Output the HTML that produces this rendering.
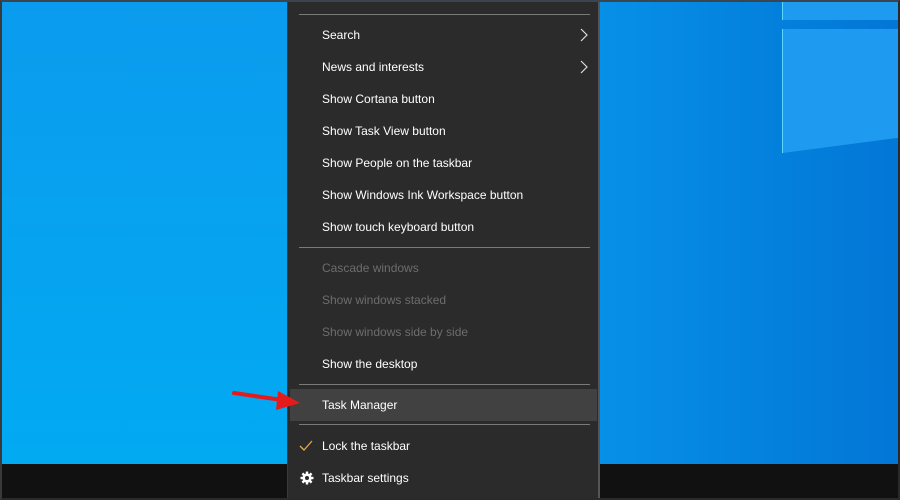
<!DOCTYPE html>
<html><head><meta charset="utf-8"><style>
*{margin:0;padding:0;box-sizing:border-box}
body{width:900px;height:500px;overflow:hidden;position:relative;font-family:"Liberation Sans",sans-serif;background:#0a8fe6}
.bgl{position:absolute;left:0;top:0;width:290px;height:464px;background:linear-gradient(180deg,#0b9bee 0%,#02aaf2 100%)}
.bgr{position:absolute;left:598px;top:0;width:302px;height:464px;background:linear-gradient(90deg,#0790e8 0%,#0380dc 60%,#0376d6 100%)}
.pane{position:absolute;background:#1e9af0;border-left:1px solid #5fd6ff}
.task{position:absolute;left:0;top:464px;width:900px;height:36px;background:#111}
.frame{position:absolute;left:0;top:0;width:900px;height:500px;border-left:2px solid #3a3a3a;border-bottom:2px solid #2a2a2a;border-top:2px solid #3a4550;border-right:2px solid #2a2a2a}
.menu{position:absolute;left:287px;top:0;width:313px;height:500px;background:#2b2b2b;border-left:1px solid #3a3a3a;border-right:2px solid #555}
.sep{position:absolute;left:11px;width:291px;height:1px;background:#7a7a7a}
.it{position:absolute;left:34px;font-size:12px;color:#fff;line-height:14px}
.dis{color:#6d6d6d}
.hl{position:absolute;left:2px;top:389px;width:307px;height:32px;background:#414141}
.chev{position:absolute;left:292px;width:8px;height:14px}
</style></head><body>
<div class="bgl"></div>
<div class="bgr"></div>
<div class="pane" style="left:782px;top:0;width:118px;height:20px"></div>
<div class="pane" style="left:782px;top:29px;width:118px;height:141px;clip-path:polygon(0 0,100% 0,100% 77%,0 88%)"></div>
<div class="task"></div>
<div class="menu">
<div class="sep" style="top:14px"></div>
<div class="it" style="top:28px">Search</div>
<svg class="chev" style="top:28px" viewBox="0 0 8 14"><path d="M1 1l6 6-6 6" fill="none" stroke="#ddd" stroke-width="1.2"/></svg>
<div class="it" style="top:60px">News and interests</div>
<svg class="chev" style="top:60px" viewBox="0 0 8 14"><path d="M1 1l6 6-6 6" fill="none" stroke="#ddd" stroke-width="1.2"/></svg>
<div class="it" style="top:92px">Show Cortana button</div>
<div class="it" style="top:124px">Show Task View button</div>
<div class="it" style="top:156px">Show People on the taskbar</div>
<div class="it" style="top:188px">Show Windows Ink Workspace button</div>
<div class="it" style="top:220px">Show touch keyboard button</div>
<div class="sep" style="top:247px"></div>
<div class="it dis" style="top:261px">Cascade windows</div>
<div class="it dis" style="top:293px">Show windows stacked</div>
<div class="it dis" style="top:325px">Show windows side by side</div>
<div class="it" style="top:357px">Show the desktop</div>
<div class="sep" style="top:384px"></div>
<div class="hl"></div>
<div class="it" style="top:398px">Task Manager</div>
<div class="sep" style="top:424px"></div>
<svg style="position:absolute;left:11px;top:440px" width="14" height="12" viewBox="0 0 14 12"><path d="M1 6l4 4 8-9" fill="none" stroke="#e8a54a" stroke-width="1.3"/></svg>
<div class="it" style="top:439px">Lock the taskbar</div>
<svg style="position:absolute;left:12px;top:471px" width="14" height="14" viewBox="0 0 14 14"><g fill="#fff"><circle cx="7" cy="7" r="4.6"/><rect x="5.8" y="0.5" width="2.4" height="13"/><rect x="0.5" y="5.8" width="13" height="2.4"/><rect x="5.8" y="0.5" width="2.4" height="13" transform="rotate(45 7 7)"/><rect x="5.8" y="0.5" width="2.4" height="13" transform="rotate(-45 7 7)"/></g><circle cx="7" cy="7" r="2" fill="#2b2b2b"/></svg>
<div class="it" style="top:471px">Taskbar settings</div>
</div>
<svg style="position:absolute;left:230px;top:388px" width="75" height="25" viewBox="0 0 75 25"><path d="M4 5L52 12" stroke="#e51b1b" stroke-width="4" stroke-linecap="round"/><path d="M48 3L70 15L46 22Z" fill="#e51b1b"/></svg>
<div class="frame"></div>
</body></html>
